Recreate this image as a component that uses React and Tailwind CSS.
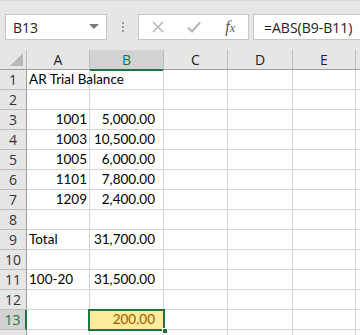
import React from "react";

const cols = [
  { w: 63, label: "A" },
  { w: 74, label: "B" },
  { w: 64, label: "C" },
  { w: 65, label: "D" },
  { w: 63, label: "E" },
];

const rows = [
  ["AR Trial Balance", "", "l"],
  ["", ""],
  ["1001", "5,000.00"],
  ["1003", "10,500.00"],
  ["1005", "6,000.00"],
  ["1101", "7,800.00"],
  ["1209", "2,400.00"],
  ["", ""],
  ["Total", "31,700.00", "l"],
  ["", ""],
  ["100-20", "31,500.00", "l"],
  ["", ""],
  ["", "200.00"],
  ["", ""],
];

const cellFont = { fontFamily: "Lato, 'Liberation Sans', sans-serif" };

export default function App() {
  return (
    <div className="w-[360px] h-[335px] overflow-hidden bg-white relative" style={{ fontFamily: "'Open Sans', 'Noto Sans', sans-serif" }}>
      {/* formula bar */}
      <div className="h-[50px] bg-[#e6e6e6] border-t border-[#d6d6d6] flex items-start pt-[13px] pl-[5px]">
        <div className="w-[102px] h-[26px] bg-white border border-[#c6c6c6] flex items-center justify-between pl-[7px] pr-[7px]">
          <span className="text-[14px] text-[#222]">B13</span>
          <svg width="10" height="6" viewBox="0 0 10 6"><path d="M0 0 L10 0 L5 5 Z" fill="#7a7a7a" /></svg>
        </div>
        <div className="w-[31px] h-[26px] flex flex-col items-center justify-center gap-[2px]">
          <div className="w-[2px] h-[2px] bg-[#9a9a9a]" />
          <div className="w-[2px] h-[2px] bg-[#9a9a9a]" />
          <div className="w-[2px] h-[2px] bg-[#9a9a9a]" />
        </div>
        <div className="w-[111px] h-[26px] bg-white border border-[#c6c6c6] flex items-center">
          <div className="w-[38px] flex justify-center">
            <svg width="12" height="12" viewBox="0 0 12 12"><path d="M1 1 L11 11 M11 1 L1 11" stroke="#b4b4b4" strokeWidth="1.5" /></svg>
          </div>
          <div className="w-[36px] flex justify-center">
            <svg width="14" height="12" viewBox="0 0 14 12"><path d="M1 6.5 L5 10.5 L13 1.5" stroke="#b4b4b4" strokeWidth="2" fill="none" /></svg>
          </div>
          <div className="w-[36px] flex justify-center">
            <span className="text-[16px] italic text-[#555]" style={{ fontFamily: "'Liberation Serif', serif" }}>f<span className="text-[12px]">x</span></span>
          </div>
        </div>
        <div className="w-[4px]" />
        <div className="flex-1 h-[26px] bg-white border border-[#c6c6c6] border-r-0 flex items-center pl-[10px]">
          <span className="text-[14px] text-[#222]">=ABS(B9-B11)</span>
        </div>
      </div>

      {/* grid */}
      <div className="flex flex-col">
        {/* header row */}
        <div className="flex h-[20px] bg-[#e6e6e6] border-b border-[#9e9e9e]">
          <div className="w-[27px] h-full border-r border-[#bdbdbd] relative shrink-0">
            <svg className="absolute left-[10px] top-[3px]" width="13" height="13" viewBox="0 0 13 13"><path d="M13 0 L13 13 L0 13 Z" fill="#b8b8b8" /></svg>
          </div>
          {cols.map((c) =>
            c.label === "B" ? (
              <div key={c.label} className="shrink-0 h-[21px] bg-[#d2d2d2] border-r border-[#bdbdbd] border-b-2 border-b-[#217346] flex items-center justify-center text-[14px] text-[#217346]" style={{ width: c.w }}>
                {c.label}
              </div>
            ) : (
              <div key={c.label} className="shrink-0 h-full border-r border-[#bdbdbd] flex items-center justify-center text-[14px] text-[#222]" style={{ width: c.w }}>
                {c.label}
              </div>
            )
          )}
          <div className="flex-1" />
        </div>
        {rows.map((r, i) => {
          const n = i + 1;
          const sel = n === 13;
          return (
            <div key={n} className="flex h-[20px] shrink-0">
              <div className={`w-[27px] h-full shrink-0 flex items-center justify-center text-[14px] border-b ${sel ? "bg-[#d2d2d2] text-[#217346] border-r-2 border-r-[#217346] border-b-[#bdbdbd]" : "bg-[#e6e6e6] text-[#333] border-r border-r-[#9e9e9e] border-b-[#bdbdbd]"}`}>
                {n <= 13 ? n : ""}
              </div>
              <div className={`w-[63px] h-full shrink-0 border-r border-b border-[#d4d4d4] flex items-center text-[13.5px] text-black ${r[2] === "l" ? "justify-start pl-[2px]" : "justify-end pr-[2px]"}`} style={cellFont}>
                <span className="whitespace-nowrap">{r[0]}</span>
              </div>
              <div className={`w-[74px] h-full shrink-0 border-r border-b border-[#d4d4d4] flex items-center justify-end pr-[8px] text-[13.5px] ${sel ? "bg-[#ffeb9c] text-[#9c5700]" : "text-black"}`} style={cellFont}>
                {r[1]}
              </div>
              <div className="w-[64px] h-full shrink-0 border-r border-b border-[#d4d4d4]" />
              <div className="w-[65px] h-full shrink-0 border-r border-b border-[#d4d4d4]" />
              <div className="w-[63px] h-full shrink-0 border-r border-b border-[#d4d4d4]" />
              <div className="flex-1 h-full border-b border-[#d4d4d4]" />
            </div>
          );
        })}
      </div>

      {/* selection border */}
      <div className="absolute left-[88px] top-[309px] w-[77px] h-[22px] border-2 border-[#217346]" />
      <div className="absolute left-[162px] top-[328px] w-[6px] h-[6px] bg-[#217346] border border-white" />
    </div>
  );
}
